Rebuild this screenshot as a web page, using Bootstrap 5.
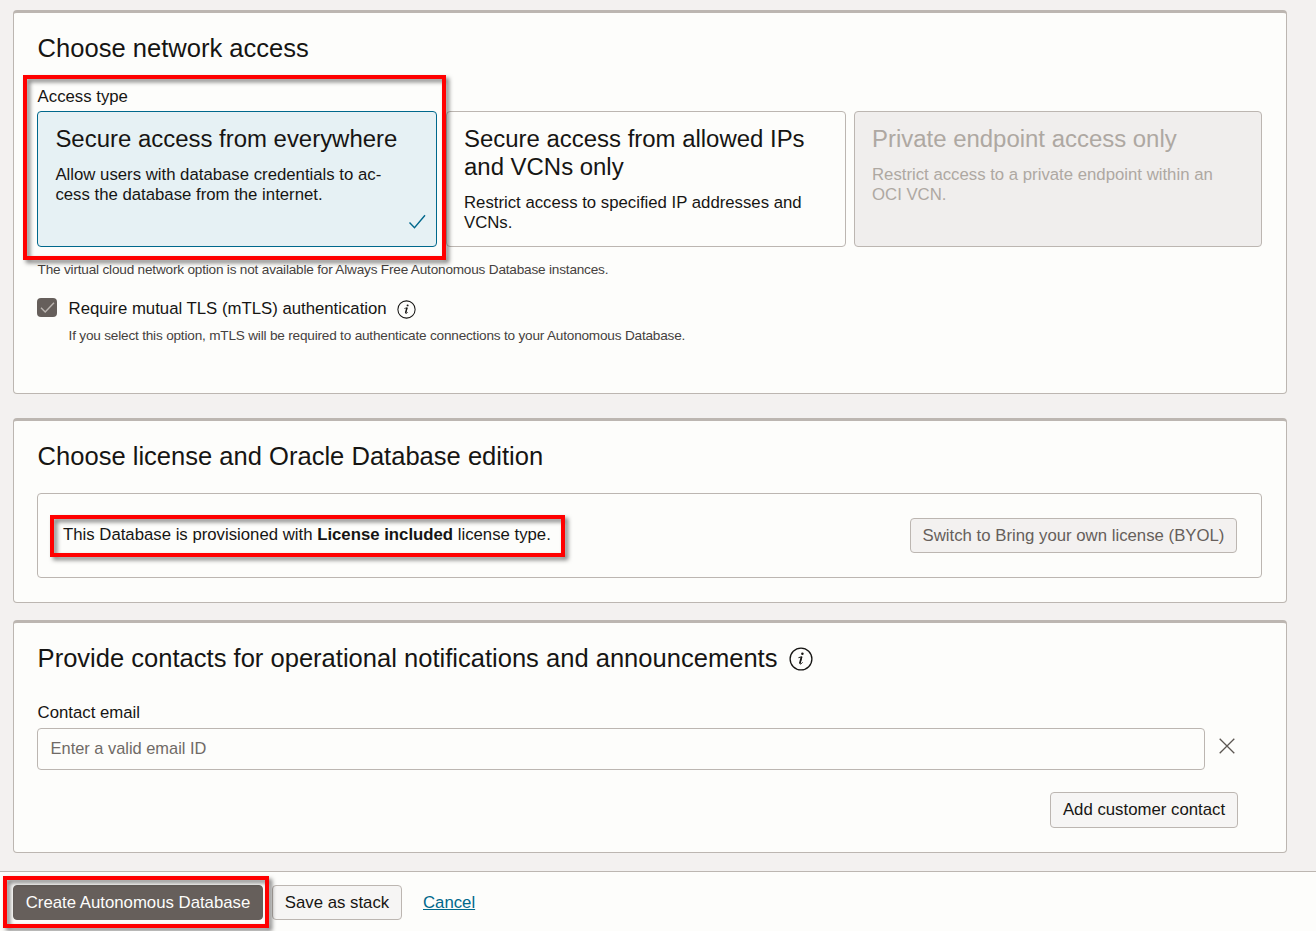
<!DOCTYPE html>
<html lang="en">
<head>
<meta charset="utf-8">
<meta name="viewport" content="width=device-width, initial-scale=1">
<title>Create Autonomous Database</title>
<link href="https://cdn.jsdelivr.net/npm/bootstrap@5.3.0/dist/css/bootstrap.min.css" rel="stylesheet">
<style>
  :root { --line: #bcb6b1; --ink: #161513; --paper: #fdfdfb; --teal: #00688c; }
  body { font-family: "Liberation Sans", Arial, sans-serif; font-size: 16.76px; line-height: 20px; color: var(--ink); background: #f3f1f0; height: 931px; overflow: hidden; }
  .panel { background: var(--paper); border: 1px solid var(--line); border-top-width: 3px; border-radius: 4px; width: 1274px; margin-left: 13px; padding: 0 24px 0 23px; flex: none; }
  .panel-network { margin-top: 10px; height: 384px; }
  .panel-license { margin-top: 24px; height: 185px; }
  .panel-contacts { margin-top: 17px; height: 233px; }
  .panel h2 { font-size: 25.55px; line-height: 32px; font-weight: 400; margin: 19px 0 0 .6px; }
  .field-label { margin-left: .6px; }
  .option { border: 1px solid var(--line); border-radius: 4px; height: 136px; width: 400px; padding: 13px 17px; background: var(--paper); }
  .option h3 { font-size: 23.95px; line-height: 28px; font-weight: 400; margin: 0 0 12px; }
  .option.selected { background: #e6f1f4; border-color: var(--teal); margin-right: 1px; padding-left: 17.4px; }
  .option.disabled { background: #f0eeed; color: #aea8a2; width: 408px; }
  .option .tick { right: 10px; bottom: 16px; color: var(--teal); }
  .hint { font-size: 13.6px; letter-spacing: -.195px; line-height: 18px; color: #45413e; }
  .check-box { width: 20px; height: 19px; background: #665f5b; border-radius: 4px; }
  .license-box { border: 1px solid var(--line); border-radius: 4px; height: 85px; margin-top: 21px; padding: 0 24px 0 25px; }
  .license-text { margin-bottom: 2px; }
  .btn { --bs-btn-font-size: 16.77px; --bs-btn-padding-x: 11px; --bs-btn-padding-y: 0; --bs-btn-line-height: 20px; --bs-btn-border-radius: 4px; --bs-btn-border-color: var(--line); --bs-btn-color: var(--ink); --bs-btn-bg: #f6f5f4; white-space: nowrap; height: 35px; }
  .btn.switch { width: 327px; --bs-btn-bg: #f3f1f0; --bs-btn-color: #665f5b; }
  .btn.add { width: 188px; height: 36px; }
  .btn.create { width: 250px; --bs-btn-bg: #665f5b; --bs-btn-border-color: #665f5b; --bs-btn-color: #fdfdfb; }
  .btn.stack { width: 130px; margin-left: 9px; }
  .form-control { height: 42px; width: 1168px; font-size: 16.4px; border-color: var(--line); border-radius: 4px; background: var(--paper); padding: 0 12.6px 2px; }
  .form-control::placeholder { color: #6f6a66; opacity: 1; }
  .footer-bar { margin-top: 18px; height: 60px; border-top: 1px solid var(--line); background: var(--paper); padding: 13px 0 0 13px; }
  .footer-bar a { color: var(--teal); margin: 8px 0 0 21px; }
  .callout { position: absolute; border: 4px solid #f00; filter: drop-shadow(3px 3px 2px rgba(0,0,0,.5)); pointer-events: none; z-index: 2; }
  .callout.access { left: -14px; top: -12px; width: 423px; height: 185px; }
  .callout.license { left: -13px; top: -10px; width: 515px; height: 42px; }
  .callout.submit { left: -10px; top: -9px; width: 266px; height: 52px; }
</style>
</head>
<body class="d-flex flex-column">
<svg class="d-none">
  <symbol id="info" viewBox="0 0 24 24">
    <circle cx="12" cy="12" r="10.9" fill="none" stroke="currentColor" stroke-width="1.3"/>
    <circle cx="13.4" cy="6.8" r="1.25" fill="currentColor"/>
    <path d="M9.8 10.6l3.1-.9-1.9 6.6c-.3 1.3 1 1 2.3-.6" fill="none" stroke="currentColor" stroke-width="1" stroke-linecap="round" stroke-linejoin="round"/>
    <path d="M12.5 10L10.8 16.4" fill="none" stroke="currentColor" stroke-width="1.7"/>
  </symbol>
</svg>

<section class="panel panel-network">
  <h2>Choose network access</h2>
  <div class="position-relative" style="margin-top:23px">
    <div class="field-label" style="height:24px">Access type</div>
    <div class="d-flex gap-2">
      <div class="option selected position-relative">
        <h3>Secure access from everywhere</h3>
        <div>Allow users with database credentials to ac-<br>cess the database from the internet.</div>
        <svg class="tick position-absolute" width="18" height="16" viewBox="0 0 18 16"><path d="M1.5 8.5l5 5.2L17 1.2" fill="none" stroke="currentColor" stroke-width="1.4"/></svg>
      </div>
      <div class="option">
        <h3>Secure access from allowed IPs<br>and VCNs only</h3>
        <div>Restrict access to specified IP addresses and<br>VCNs.</div>
      </div>
      <div class="option disabled">
        <h3>Private endpoint access only</h3>
        <div>Restrict access to a private endpoint within an<br>OCI VCN.</div>
      </div>
    </div>
    <div class="callout access"></div>
  </div>
  <div class="hint field-label" style="margin-top:14px">The virtual cloud network option is not available for Always Free Autonomous Database instances.</div>
  <div class="d-flex" style="margin-top:19px">
    <div class="check-box flex-shrink-0"><svg class="d-block" width="20" height="19" viewBox="0 0 20 19"><path d="M4 9.7l4.2 4.2L17 4.8" fill="none" stroke="#bcb6b1" stroke-width="1.4"/></svg></div>
    <div style="margin:1px 0 0 11.6px">
      <div class="d-flex"><span>Require mutual TLS (mTLS) authentication</span><svg width="19" height="19" style="margin:1px 0 0 10px"><use href="#info"/></svg></div>
      <div class="hint" style="margin-top:8px">If you select this option, mTLS will be required to authenticate connections to your Autonomous Database.</div>
    </div>
  </div>
</section>

<section class="panel panel-license">
  <h2>Choose license and Oracle Database edition</h2>
  <div class="license-box d-flex align-items-center justify-content-between">
    <div class="license-text position-relative">This Database is provisioned with <b>License included</b> license type.<div class="callout license"></div></div>
    <button class="btn switch" type="button">Switch to Bring your own license (BYOL)</button>
  </div>
</section>

<section class="panel panel-contacts">
  <h2 class="d-flex align-items-center">Provide contacts for operational notifications and announcements<svg width="24" height="24" style="margin:2px 0 0 11.5px"><use href="#info"/></svg></h2>
  <label class="field-label d-block" for="email" style="margin-top:29px;height:25px">Contact email</label>
  <div class="d-flex">
    <input id="email" class="form-control" type="email" placeholder="Enter a valid email ID">
    <svg width="16" height="16" viewBox="0 0 16 16" style="margin:10px 0 0 14px"><path d="M.7.7l14.6 14.6M15.3.7L.7 15.3" stroke="#5b5652" stroke-width="1.3"/></svg>
  </div>
  <div class="d-flex justify-content-end" style="margin:22px 24px 0 0"><button class="btn add" type="button">Add customer contact</button></div>
</section>

<footer class="footer-bar d-flex align-items-start flex-shrink-0">
  <div class="position-relative"><button class="btn create d-block" type="button">Create Autonomous Database</button><div class="callout submit"></div></div>
  <button class="btn stack" type="button">Save as stack</button>
  <a href="#">Cancel</a>
</footer>
<script src="https://cdn.jsdelivr.net/npm/bootstrap@5.3.0/dist/js/bootstrap.bundle.min.js"></script>
</body>
</html>
